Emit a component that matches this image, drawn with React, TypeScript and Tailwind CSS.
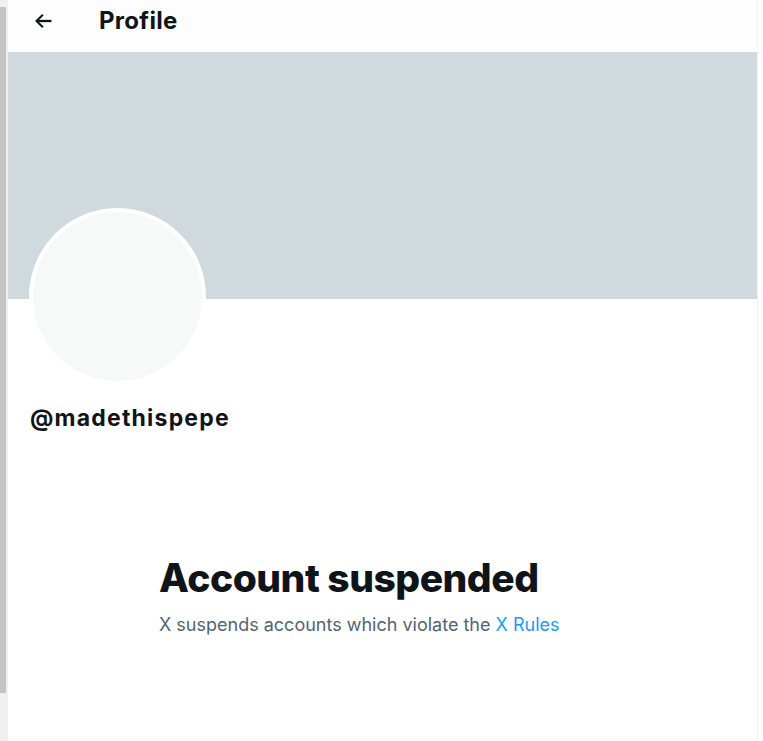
import React from "react";

export default function App() {
  return (
    <div className="flex h-[741px] w-[763px] overflow-hidden bg-white" style={{ fontFamily: "Inter, 'Noto Sans', sans-serif" }}>
      <div className="flex w-[8px] shrink-0 bg-[#f0f0f0]">
        <div className="mt-[7px] h-[686px] w-[6px] bg-[#c4c4c4]" />
      </div>
      <div className="flex w-[750px] shrink-0 flex-col border-r border-[#eff3f4]">
        <div className="flex h-[52px] items-start bg-[#fdfdfd] pt-[6px]">
          <div className="ml-[24px] mt-[4px] flex w-[67px] items-center">
            <svg width="22" height="22" viewBox="0 0 24 24" fill="#0f1419" stroke="#0f1419" strokeWidth="0.4">
              <path d="M7.414 13l5.043 5.04-1.414 1.42L3.586 12l7.457-7.46 1.414 1.42L7.414 11H21v2H7.414z" />
            </svg>
          </div>
          <div className="text-[24px] font-bold leading-[30px] tracking-[0.3px] text-[#0f1419]">Profile</div>
        </div>
        <div className="h-[247px] bg-[#cfd9de]" />
        <div className="ml-[21px] mt-[-91px] h-[177px] w-[177px] rounded-full border-[4px] border-white bg-[#f7f9f9]" />
        <div className="ml-[22px] mt-[18px] text-[23px] font-bold leading-[30px] tracking-[1.2px] text-[#0f1419]">@madethispepe</div>
        <div className="ml-[151px] mt-[122px] flex flex-col">
          <div className="text-[39px] font-extrabold leading-[46px] tracking-[-0.5px] text-[#0f1419]">Account suspended</div>
          <div className="mt-[13px] text-[18px] leading-[22px] text-[#536471]">
            X suspends accounts which violate the <span className="text-[#1d9bf0]">X Rules</span>
          </div>
        </div>
      </div>
    </div>
  );
}
